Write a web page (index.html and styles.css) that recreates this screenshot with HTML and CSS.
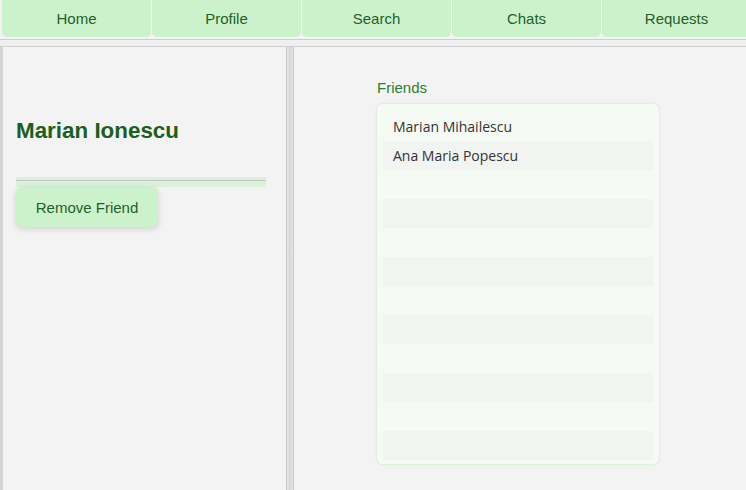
FILE: index.html
```html
<!DOCTYPE html>
<html>
<head>
<meta charset="utf-8">
<link rel="stylesheet" href="styles.css">
</head>
<body>
<nav class="nav">
  <a class="nav-btn">Home</a>
  <a class="nav-btn">Profile</a>
  <a class="nav-btn">Search</a>
  <a class="nav-btn">Chats</a>
  <a class="nav-btn">Requests</a>
</nav>
<div class="hbar"></div>
<main class="main">
  <section class="left">
    <h2 class="name">Marian Ionescu</h2>
    <div class="rule"></div>
    <button class="remove">Remove Friend</button>
  </section>
  <div class="vbar"></div>
  <section class="right">
    <div class="label">Friends</div>
    <div class="list">
      <div class="row">Marian Mihailescu</div>
      <div class="row">Ana Maria Popescu</div>
      <div class="row"></div>
      <div class="row"></div>
      <div class="row"></div>
      <div class="row"></div>
      <div class="row"></div>
      <div class="row"></div>
      <div class="row"></div>
      <div class="row"></div>
      <div class="row"></div>
      <div class="row"></div>
    </div>
  </section>
</main>
</body>
</html>
```

FILE: styles.css
```css
* { box-sizing: border-box; }
html, body { margin: 0; height: 100%; }
body {
  background: #f3f3f3;
  font-family: "Liberation Sans", Arial, sans-serif;
  display: flex;
  flex-direction: column;
  overflow: hidden;
}
.nav {
  display: flex;
  gap: 1px;
  height: 37px;
  flex: none;
  padding-left: 2px;
  overflow: hidden;
}
.nav-btn {
  width: 149px;
  flex: none;
  display: flex;
  align-items: center;
  justify-content: center;
  background: #ccf2cc;
  color: #1f5f2a;
  font-size: 15px;
  border-radius: 0 0 5px 5px;
}
.hbar {
  flex: none;
  margin-top: 2px;
  height: 8px;
  border-top: 1px solid #cfcfcf;
  border-bottom: 1px solid #cfcfcf;
  background: #efefef;
}
.main {
  flex: 1;
  display: flex;
  min-height: 0;
}
.left {
  width: 287px;
  flex: none;
  border-left: 3px solid #d4d4d4;
  border-right: 1px solid #c8c8c8;
  padding: 71px 20px 0 13px;
}
.name {
  margin: 0;
  font-size: 22.4px;
  line-height: 25px;
  font-weight: bold;
  color: #1b5e20;
}
.rule {
  margin-top: 34px;
  height: 10px;
  background: #d9f2d9;
  border-top: 3px solid #d9f2d9;
}
.rule::before {
  content: "";
  display: block;
  height: 1px;
  background: #c4c4c4;
}
.remove {
  display: block;
  border: none;
  background: #ccf2cc;
  color: #1f5f2a;
  font-family: "Liberation Sans", Arial, sans-serif;
  font-size: 15px;
  width: 142px;
  height: 40px;
  border-radius: 6px;
  box-shadow: 0 2px 6px rgba(0,0,0,0.15);
}
.vbar {
  width: 7px;
  flex: none;
  background: linear-gradient(to right, #e6e6e6, #d6d6d6 50%, #e6e6e6);
  border-right: 1px solid #c8c8c8;
}
.right {
  flex: 1;
  padding: 32px 0 0 82px;
}
.label {
  color: #2e7d32;
  font-size: 15px;
  line-height: 17px;
  margin-left: 1px;
}
.list {
  margin-top: 7px;
  width: 284px;
  height: 362px;
  overflow: hidden;
  background: #f5faf5;
  border: 1px solid #dcf0dc;
  border-radius: 7px;
  padding: 8px 6px 6px;
  box-shadow: 0 0 3px rgba(0,0,0,0.04);
}
.row {
  height: 29px;
  line-height: 29px;
  padding-left: 10px;
  font-family: "Open Sans", "Noto Sans", sans-serif;
  font-size: 14px;
  color: #333;
}
.row:nth-child(even) { background: #f2f4f2; }
```
